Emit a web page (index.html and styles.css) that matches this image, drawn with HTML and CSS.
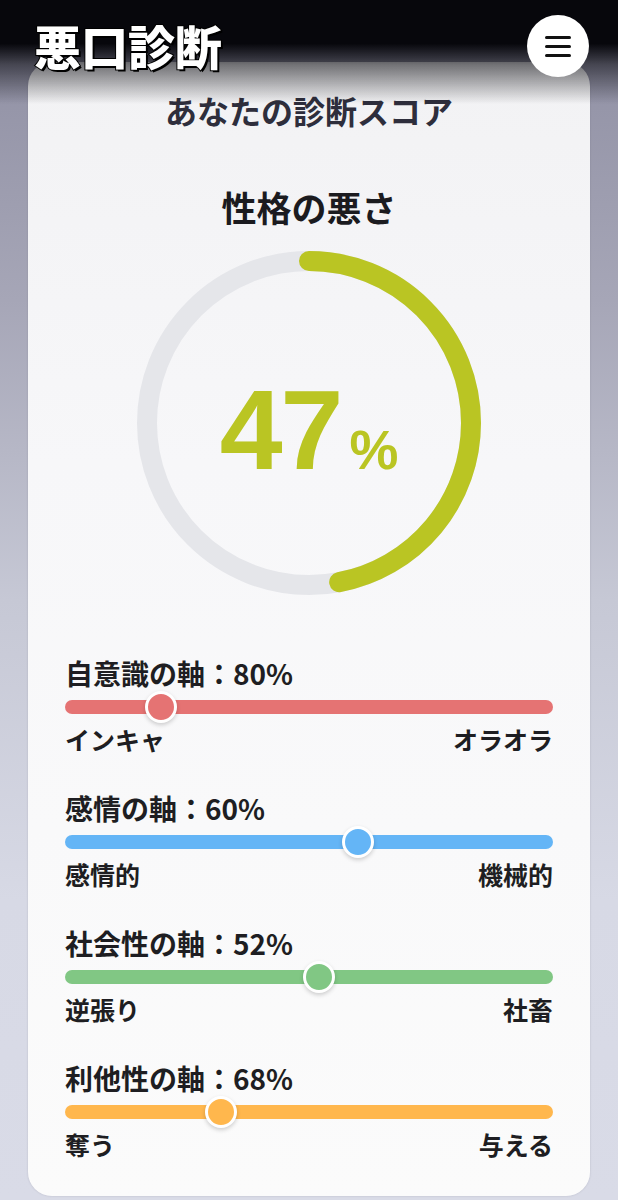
FILE: index.html
```html
<!DOCTYPE html>
<html lang="ja">
<head>
    <meta charset="UTF-8">
    <meta name="viewport" content="width=device-width, initial-scale=1.0">
    <title>悪口診断</title>
    <link rel="stylesheet" href="styles.css">
</head>
<body>

    <header class="site-header">
        <h1 class="logo">悪口診断</h1>
        <button class="menu-button" aria-label="メニュー">
            <span></span><span></span><span></span>
        </button>
    </header>

    <main class="page">
        <section class="result-card">
            <h2 class="card-title">あなたの診断スコア</h2>
            <h3 class="score-title">性格の悪さ</h3>

            <div class="gauge">
                <svg width="344" height="344" viewBox="0 0 344 344">
                    <circle cx="172" cy="172" r="162" fill="none" stroke="#e5e6ea" stroke-width="20"/>
                    <!-- 47% of the circumference: 2*pi*162 = 1017.9 -->
                    <circle cx="172" cy="172" r="162" fill="none" stroke="#bac523" stroke-width="20"
                        stroke-linecap="round" stroke-dasharray="478.4 1017.9"
                        transform="rotate(-90 172 172)"/>
                </svg>
                <div class="gauge-value"><span class="num">47</span><span class="pct">%</span></div>
            </div>

            <div class="axis-list">
                <div class="axis axis-red">
                    <div class="axis-label">自意識の軸：80%</div>
                    <div class="track"><span class="thumb" style="left: 19.7%"></span></div>
                    <div class="axis-ends"><span>インキャ</span><span>オラオラ</span></div>
                </div>
                <div class="axis axis-blue">
                    <div class="axis-label">感情の軸：60%</div>
                    <div class="track"><span class="thumb" style="left: 60%"></span></div>
                    <div class="axis-ends"><span>感情的</span><span>機械的</span></div>
                </div>
                <div class="axis axis-green">
                    <div class="axis-label">社会性の軸：52%</div>
                    <div class="track"><span class="thumb" style="left: 52%"></span></div>
                    <div class="axis-ends"><span>逆張り</span><span>社畜</span></div>
                </div>
                <div class="axis axis-orange">
                    <div class="axis-label">利他性の軸：68%</div>
                    <div class="track"><span class="thumb" style="left: 32%"></span></div>
                    <div class="axis-ends"><span>奪う</span><span>与える</span></div>
                </div>
            </div>
        </section>
    </main>

</body>
</html>
```

FILE: styles.css
```css
body {
    margin: 0;
    min-height: 1200px;
    font-family: "Noto Sans CJK JP", "Noto Sans", sans-serif;
    color: #1e1e22;
    background: linear-gradient(to bottom, #8d8da1 0, #a6a6b7 300px, #c6c8d5 600px, #d7d9e5 900px, #d9dbe7 100%);
}

/* fixed header fades from black into the page */
.site-header {
    position: fixed;
    top: 0;
    left: 0;
    right: 0;
    height: 104px;
    display: flex;
    justify-content: space-between;
    align-items: flex-start;
    padding: 0 29px 0 34px;
    background: linear-gradient(to bottom, #07070c 0, #07070c 42%, rgba(7, 7, 12, 0.55) 62%, rgba(7, 7, 12, 0) 100%);
    z-index: 10;
}
.logo {
    margin: 14px 0 0;
    font-size: 47px;
    font-weight: 900;
    line-height: 62px;
    color: #fff;
    -webkit-text-stroke: 2px #000;
    paint-order: stroke fill;
    text-shadow: 2px 2px 0 #000;
}
.menu-button {
    margin-top: 15px;
    width: 62px;
    height: 62px;
    border: none;
    border-radius: 50%;
    background: #fff;
    display: flex;
    flex-direction: column;
    justify-content: center;
    align-items: center;
    gap: 6px;
    padding: 0;
}
.menu-button span {
    display: block;
    width: 26px;
    height: 3px;
    border-radius: 2px;
    background: #111;
}

.page {
    padding: 62px 28px 0;
}
.result-card {
    background: linear-gradient(to bottom, #f2f2f4 0, #f7f7f9 400px, #fbfbfb 100%);
    border-radius: 24px;
    box-shadow: 0 0 2px rgba(80, 80, 100, 0.25);
    padding: 28px 37px 30px;
    display: flex;
    flex-direction: column;
    align-items: center;
    height: 1134px;
    box-sizing: border-box;
}
.card-title {
    margin: 0;
    font-size: 32px;
    line-height: 40px;
    font-weight: 700;
    color: #2e2e3c;
}
.score-title {
    margin: 55px 0 0;
    font-size: 35px;
    line-height: 44px;
    font-weight: 700;
    color: #1b1b1f;
}

.gauge {
    position: relative;
    width: 344px;
    height: 344px;
    margin-top: 22px;
}
.gauge svg {
    display: block;
}
.gauge-value {
    position: absolute;
    inset: 0;
    display: flex;
    justify-content: center;
    align-items: baseline;
    padding-top: 123px;
    box-sizing: border-box;
    font-family: "Liberation Sans", Arial, sans-serif;
    font-weight: 700;
    color: #bac523;
}
.gauge-value .num {
    font-size: 113px;
    line-height: 112px;
    letter-spacing: -2px;
}
.gauge-value .pct {
    font-size: 55px;
    margin-left: 8px;
}

.axis-list {
    align-self: stretch;
    margin-top: 60px;
    display: flex;
    flex-direction: column;
    gap: 35px;
}
.axis-label {
    font-size: 28px;
    line-height: 36px;
    font-weight: 700;
    color: #1e1e22;
}
.track {
    position: relative;
    height: 14px;
    margin: 9px 0;
    border-radius: 7px;
}
.thumb {
    position: absolute;
    top: 50%;
    width: 26px;
    height: 26px;
    border: 3px solid #fff;
    border-radius: 50%;
    transform: translate(-50%, -50%);
    box-shadow: 0 2px 4px rgba(0, 0, 0, 0.18);
}
.axis-ends {
    display: flex;
    justify-content: space-between;
    margin-top: 3px;
    font-size: 25px;
    line-height: 32px;
    font-weight: 700;
    color: #1e1e22;
}

.axis-red .track, .axis-red .thumb { background: #e57373; }
.axis-blue .track, .axis-blue .thumb { background: #64b5f6; }
.axis-green .track, .axis-green .thumb { background: #81c784; }
.axis-orange .track, .axis-orange .thumb { background: #ffb74d; }
```
